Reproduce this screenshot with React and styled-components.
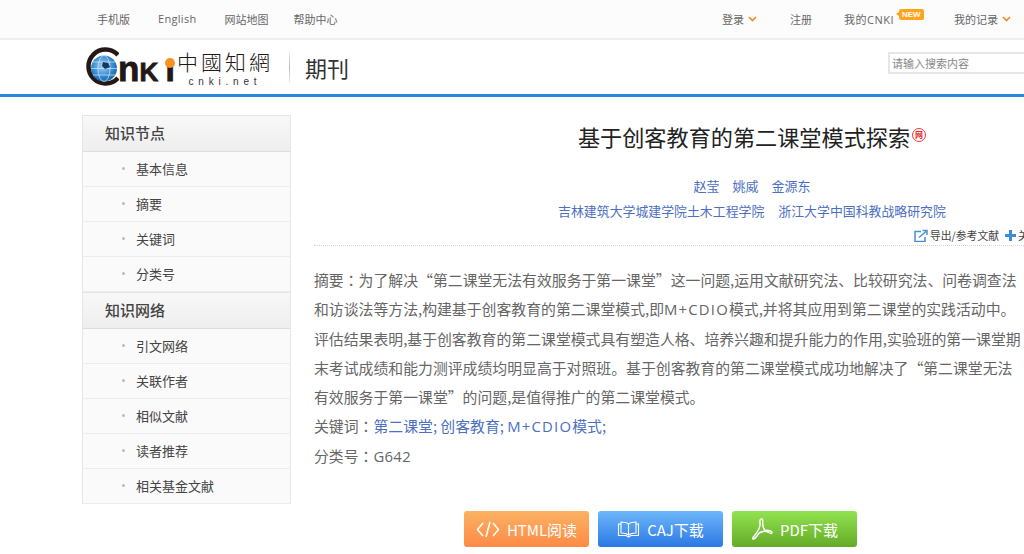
import React from "react";
import styled, { createGlobalStyle } from "styled-components";

const CJK = `"Noto Sans CJK SC", "Noto Sans", sans-serif`;
const Global = createGlobalStyle`
  html, body { margin: 0; padding: 0; background: #fff; overflow: hidden; height: 554px; }
  body { font-family: ${CJK}; }
  * { box-sizing: border-box; }
`;
const Page = styled.div`width: 1024px; height: 554px; overflow: hidden;`;
const TopBar = styled.div`
  height: 40px; background: #fcfcfc; border-bottom: 2px solid #eeeeee;
  display: flex; align-items: center; padding: 0 13px 1px 97px; font-size: 11px; color: #666;
  font-family: "Open Sans", ${CJK};
`;
const TopLeft = styled.div`display: flex; flex: 1;`;
const TopRight = styled.div`display: flex; align-items: center;`;
const TopLink = styled.span`
  display: inline-flex; align-items: center; gap: 4px; white-space: nowrap; position: relative;
  margin-left: ${p => p.$gap || 0}px; letter-spacing: ${p => p.$track || 0}px;
`;
const NewBadge = styled.span`
  position: absolute; left: 55px; top: -2px; background: #ffa41c; color: #fff; letter-spacing: 0;
  font: bold 8px/11px "Liberation Sans", sans-serif; padding: 0 3px; border-radius: 2px;
  &::before {
    content: ""; position: absolute; left: -3px; top: 3px;
    border-right: 3px solid #ffa41c; border-top: 2.5px solid transparent; border-bottom: 2.5px solid transparent;
  }
`;
const Header = styled.div`
  height: 57px; border-bottom: 3px solid #2b89d9; display: flex; align-items: center;
  padding-left: 85px; position: relative;
`;
const LogoMark = styled.div`display: flex; align-items: center; width: 204px; height: 44px; position: relative; flex: none;`;
const LogoLetters = styled.span`
  display: inline-flex; align-items: baseline; margin: 6px 0 0 -1px; color: #231815;
  font: bold 35px/36px "Liberation Sans", sans-serif; -webkit-text-stroke: 0.8px #231815;
`;
const CapK = styled.span`font-size: 26px; margin-right: 7px;`;
const OrangeDot = styled.span`
  position: absolute; left: 80px; top: 13px; width: 10px; height: 10px; border-radius: 50%; background: #f7931e;
`;
const LogoSide = styled.div`display: flex; flex-direction: column; align-items: center; margin-left: 2px;`;
const LogoCn = styled.span`font: 300 21px/26px "Noto Sans CJK TC", sans-serif; color: #231815; letter-spacing: 3px; white-space: nowrap;`;
const LogoEn = styled.span`font: 400 10px/9px "Liberation Sans", sans-serif; color: #333; letter-spacing: 4.8px; margin-top: 3px; white-space: nowrap;`;
const Divider = styled.div`width: 1px; height: 32px; background: linear-gradient(#eee, #bbb 50%, #eee); margin-right: 15px; flex: none;`;
const Section = styled.div`font-size: 22px; color: #333; line-height: 28px;`;
const Search = styled.div`
  position: absolute; left: 888px; top: 12px; width: 140px; height: 22px; border: 2px solid #e6e6e6;
  font-size: 11px; line-height: 18px; color: #888; padding-left: 2px;
`;
const Main = styled.div`display: flex; align-items: flex-start; padding: 18px 0 0 82px; gap: 23px;`;
const Side = styled.nav`width: 209px; flex: none; border: 1px solid #e6e6e6; border-top: 0; border-bottom: 0; background: #fafafa;`;
const SideHead = styled.div`
  height: 37px; padding: 0 0 3px 22px; display: flex; align-items: center; font-size: 15px; font-weight: 500; color: #444;
  background: linear-gradient(#f8f8f8, #eeeeee); border-top: 1px solid #e4e4e4; border-bottom: 1px solid #dddddd;
`;
const SideItem = styled.div`
  height: 35px; padding: 0 0 2px 39px; display: flex; align-items: center; gap: 11px; font-size: 13px; color: #444;
  border-bottom: 1px solid #ededed;
  &::before { content: ""; width: 3px; height: 3px; background: #bbb; border-radius: 50%; }
`;
const Content = styled.main`width: 710px; flex: none; min-width: 0;`;
const Centered = styled.div`padding-left: 176px; width: 700px;`;
const Title = styled.h1`
  margin: 6px 0 0; font-size: 22.15px; font-weight: 400; line-height: 30px; color: #222;
  display: flex; justify-content: center; align-items: flex-start; white-space: nowrap;
`;
const Mark = styled.span`
  width: 14px; height: 14px; margin: 7px 0 0 2px; border: 1.5px solid #f03a3a; border-radius: 50%; color: #e82c2c;
  font-size: 8px; font-weight: 700; line-height: 11px; text-align: center; flex: none;
`;
const Authors = styled.div`margin-top: 25px; display: flex; justify-content: center; gap: 13px; font-size: 13px; line-height: 20px; color: #4d6fc2; white-space: nowrap;`;
const Orgs = styled(Authors)`margin-top: 5px; gap: 14px; font-size: 12.9px;`;
const Tools = styled.div`
  margin-top: 5px; height: 20px; border-bottom: 1px dotted #d4d4d4; width: 710px; display: flex;
  align-items: center; gap: 6px; font-size: 10.8px; color: #444; white-space: nowrap; overflow: hidden; padding: 0 0 1px 600px;
`;
const ToolLink = styled.span`display: inline-flex; align-items: center; gap: 2px; flex: none;`;
const Abstract = styled.p`margin: 19px 0 0; font-size: 14.87px; line-height: 29.3px; color: #666; width: 708px;`;
const Meta = styled.div`font-size: 14.87px; line-height: 29.3px; color: #666;`;
const KeyLink = styled.span`color: #4d6fc2;`;
const Colon = styled.span`font-family: "Noto Sans CJK TC", sans-serif; line-height: 1;`;
const Latin = styled.span`font-family: "Open Sans", sans-serif; line-height: 1; letter-spacing: ${p => p.$track ?? 1.2}px;`;
const Buttons = styled.div`display: flex; gap: 9px; margin: 41px 0 0 150px;`;
const Btn = styled.div`
  width: 125px; height: 36px; border-radius: 3px; color: #fff; font-size: 15px; display: flex; align-items: center;
  justify-content: center; gap: 7px; background: linear-gradient(${p => p.$from}, ${p => p.$to});
`;

const Globe = () => (
  <svg width="34" height="44" viewBox="0 0 34 44" style={{ flex: "none" }}>
    <defs>
      <radialGradient id="glb" cx="0.45" cy="0.4" r="0.7">
        <stop offset="0" stopColor="#a9d3f2" /><stop offset="0.6" stopColor="#2f86cf" /><stop offset="1" stopColor="#13578f" />
      </radialGradient>
    </defs>
    <path d="M33 10 A17 17 0 1 0 33 33" fill="none" stroke="#231815" strokeWidth="4.5" />
    <circle cx="19" cy="23.500" r="13" fill="url(#glb)" />
    <ellipse cx="19" cy="23.500" rx="6" ry="13" fill="none" stroke="#d6eafa" strokeWidth="0.7" />
    <path d="M6 23.500h26M8 17h22M8 30h22" stroke="#d6eafa" strokeWidth="0.7" />
    <path d="M18 17l5 1 2 4-5 2-3-3z" fill="#16385f" />
  </svg>
);
const Chevron = () => (
  <svg width="9" height="6" viewBox="0 0 9 6"><path d="M1 1l3.5 3.5L8 1" fill="none" stroke="#f08a1d" strokeWidth="1.6" /></svg>
);
const ExportIcon = () => (
  <svg width="14" height="13" viewBox="0 0 14 13" fill="none" stroke="#4a90d9" strokeWidth="1.5">
    <path d="M7 2.500H1v10h10V8" /><path d="M5 8.500l7-6M8.500 1.500h4.500V6" />
  </svg>
);
const PlusIcon = () => (
  <svg width="11" height="11" viewBox="0 0 11 11"><path d="M5.500 0v11M0 5.500h11" stroke="#3d8bdb" strokeWidth="3" /></svg>
);
const CodeIcon = () => (
  <svg width="24" height="17" viewBox="0 0 24 17" fill="none" stroke="#fff" strokeWidth="1.6">
    <path d="M7 2L1.500 8.500 7 15M17 2l5.500 6.500L17 15M14 1l-4 15" />
  </svg>
);
const BookIcon = () => (
  <svg width="23" height="17" viewBox="0 0 23 17" fill="none" stroke="#fff" strokeWidth="1.1">
    <path d="M11.500 3C9.500 1.200 7 1 4 1v11c3 0 5.500 .3 7.500 2 2-1.700 4.500-2 7.500-2V1c-3 0-5.500 .2-7.500 2zM11.500 3v11" />
    <path d="M4 3H1.500v11.500h7.500l2.500 1.500 2.500-1.500h7.500V3H19" />
  </svg>
);
const PdfIcon = () => (
  <svg width="22" height="22" viewBox="0 0 22 22" fill="none" stroke="#fff" strokeWidth="1.5" strokeLinejoin="round">
    <path d="M10.500 1C9 1 8.500 3 9 5c.6 3-2 8-5 12-2 2.500-3 3.500-2 4 1.500.5 3.500-2 6-6 3-1.500 7-2 9-1 2 1.500 4 2 4 .5S17 12 14 12.500c-2-2.500-2.500-5.500-2.300-8.500C11.800 2 11.500 1 10.500 1z" />
  </svg>
);

const nav1 = ["基本信息", "摘要", "关键词", "分类号"];
const nav2 = ["引文网络", "关联作者", "相似文献", "读者推荐", "相关基金文献"];

export default function App() {
  return (
    <Page>
      <Global />
      <TopBar>
        <TopLeft>
          <TopLink>手机版</TopLink>
          <TopLink $gap={28} $track={0.3}>English</TopLink>
          <TopLink $gap={28}>网站地图</TopLink>
          <TopLink $gap={25}>帮助中心</TopLink>
        </TopLeft>
        <TopRight>
          <TopLink>登录<Chevron /></TopLink>
          <TopLink $gap={33}>注册</TopLink>
          <TopLink $gap={32} $track={0.5}>我的CNKI<NewBadge>NEW</NewBadge></TopLink>
          <TopLink $gap={60}>我的记录<Chevron /></TopLink>
        </TopRight>
      </TopBar>
      <Header>
        <LogoMark>
          <Globe />
          <LogoLetters>n<CapK>K</CapK>ı</LogoLetters>
          <OrangeDot />
          <LogoSide><LogoCn>中國知網</LogoCn><LogoEn>cnki.net</LogoEn></LogoSide>
        </LogoMark>
        <Divider />
        <Section>期刊</Section>
        <Search>请输入搜索内容</Search>
      </Header>
      <Main>
        <Side>
          <SideHead>知识节点</SideHead>
          {nav1.map(t => <SideItem key={t}>{t}</SideItem>)}
          <SideHead>知识网络</SideHead>
          {nav2.map(t => <SideItem key={t}>{t}</SideItem>)}
        </Side>
        <Content>
          <Centered>
            <Title>基于创客教育的第二课堂模式探索<Mark>网</Mark></Title>
            <Authors><span>赵莹</span><span>姚威</span><span>金源东</span></Authors>
            <Orgs><span>吉林建筑大学城建学院土木工程学院</span><span>浙江大学中国科教战略研究院</span></Orgs>
          </Centered>
          <Tools>
            <ToolLink><ExportIcon />导出/参考文献</ToolLink>
            <ToolLink><PlusIcon />关注</ToolLink>
          </Tools>
          <Abstract>摘要<Colon>：</Colon>为了解决“第二课堂无法有效服务于第一课堂”这一问题,运用文献研究法、比较研究法、问卷调查法和访谈法等方法,构建基于创客教育的第二课堂模式,即<Latin>M+CDIO</Latin>模式,并将其应用到第二课堂的实践活动中。评估结果表明,基于创客教育的第二课堂模式具有塑造人格、培养兴趣和提升能力的作用,实验班的第一课堂期末考试成绩和能力测评成绩均明显高于对照班。基于创客教育的第二课堂模式成功地解决了“第二课堂无法有效服务于第一课堂”的问题,是值得推广的第二课堂模式。</Abstract>
          <Meta>关键词<Colon>：</Colon><KeyLink>第二课堂; 创客教育; <Latin>M+CDIO</Latin>模式;</KeyLink></Meta>
          <Meta>分类号<Colon>：</Colon><Latin $track={0.3}>G642</Latin></Meta>
          <Buttons>
            <Btn $from="#fbb264" $to="#fd8a45"><CodeIcon />HTML阅读</Btn>
            <Btn $from="#6db7fb" $to="#2b78e4"><BookIcon />CAJ下载</Btn>
            <Btn $from="#92e350" $to="#64ab28"><PdfIcon />PDF下载</Btn>
          </Buttons>
        </Content>
      </Main>
    </Page>
  );
}
